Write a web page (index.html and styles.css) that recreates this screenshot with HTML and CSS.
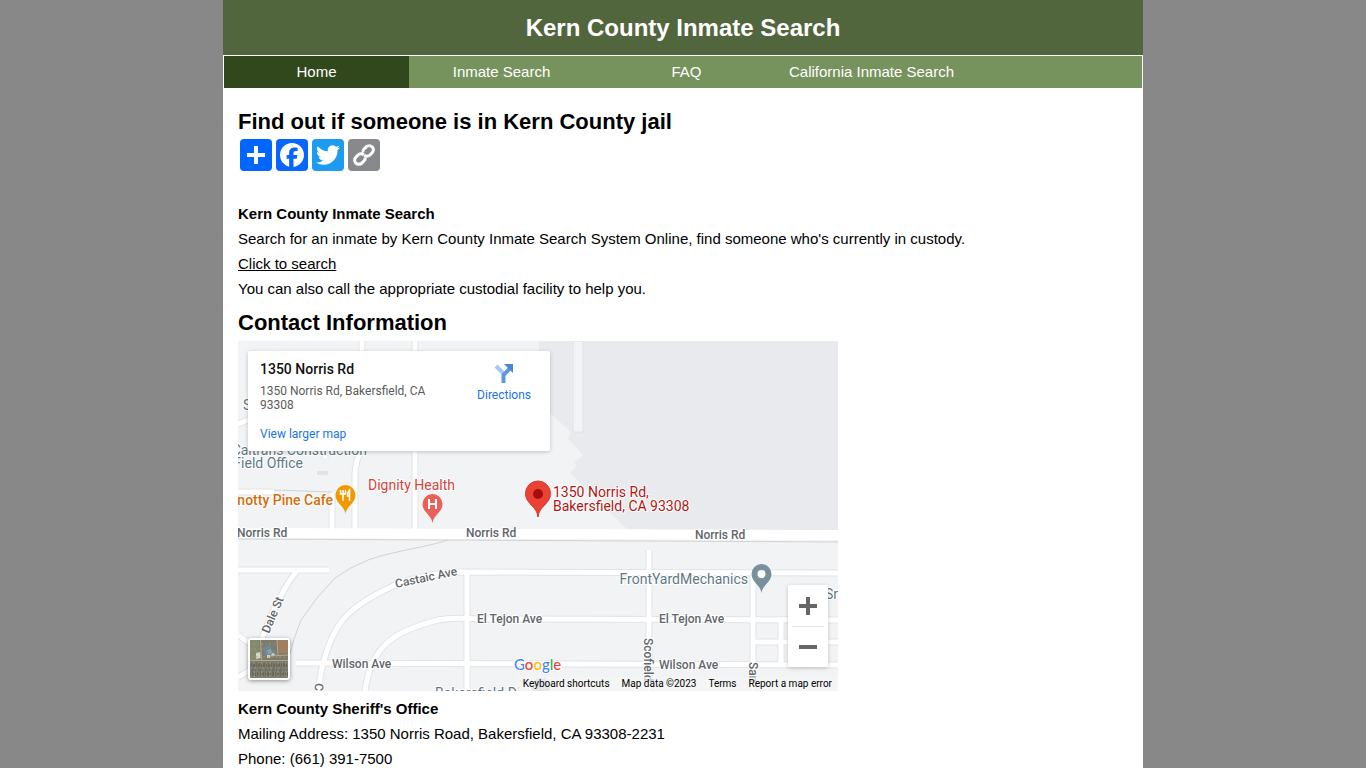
FILE: index.html
```
<!DOCTYPE html>
<html lang="en">
<head>
    <meta charset="UTF-8">
    <meta name="viewport" content="width=device-width, initial-scale=1.0">
    <title>Kern County Inmate Search</title>
    <link rel="stylesheet" href="styles.css">
</head>
<body>
    <div class="container">
        <header class="header">
            <h1>Kern County Inmate Search</h1>
        </header>
        <nav class="menu">
            <a href="#" class="active">Home</a>
            <a href="#search">Inmate Search</a>
            <a href="#faq">FAQ</a>
            <a href="#california">California Inmate Search</a>
        </nav>

        <main class="content">
            <h2>Find out if someone is in Kern County jail</h2>
            <div class="share">
                <a href="#share" class="share-any" aria-label="Share">
                    <svg viewBox="0 0 32 32"><path d="M14 7h4v18h-4z"/><path d="M7 14h18v4H7z"/></svg>
                </a>
                <a href="#facebook" class="share-facebook" aria-label="Facebook">
                    <svg viewBox="0 0 32 32"><path d="M28 16c0-6.627-5.373-12-12-12S4 9.373 4 16c0 5.628 3.875 10.35 9.101 11.647v-7.98h-2.474V16H13.1v-1.58c0-4.085 1.849-5.978 5.859-5.978.76 0 2.072.15 2.608.298v3.325c-.283-.03-.775-.045-1.386-.045-1.967 0-2.728.745-2.728 2.683V16h3.92l-.673 3.667h-3.247v8.245C23.395 27.195 28 22.135 28 16"/></svg>
                </a>
                <a href="#twitter" class="share-twitter" aria-label="Twitter">
                    <svg viewBox="0 0 32 32"><path d="M28 8.557a10 10 0 0 1-2.828.775 4.930 4.930 0 0 0 2.166-2.725 9.700 9.700 0 0 1-3.130 1.194 4.920 4.920 0 0 0-3.593-1.550 4.924 4.924 0 0 0-4.794 6.049c-4.090-.210-7.720-2.170-10.150-5.150a4.940 4.940 0 0 0-.665 2.477c0 1.710.870 3.214 2.190 4.100a5 5 0 0 1-2.230-.616v.060c0 2.390 1.700 4.380 3.952 4.830-.414.115-.850.174-1.297.174q-.476-.001-.928-.086a4.935 4.935 0 0 0 4.600 3.420 9.900 9.900 0 0 1-6.114 2.107q-.597 0-1.175-.068a13.950 13.950 0 0 0 7.550 2.213c9.056 0 14.010-7.507 14.010-14.013q0-.320-.015-.637c.960-.695 1.795-1.560 2.455-2.550z"/></svg>
                </a>
                <a href="#copy" class="share-copy" aria-label="Copy link">
                    <svg viewBox="0 0 32 32" class="outline">
                        <g transform="rotate(-45 16 16)">
                            <path d="M15 18.500a3.500 3.500 0 0 1-3 1.700H8.700a4.200 4.200 0 0 1 0-8.400H12q3.500.500 4 4"/>
                            <path d="M17 13.500a3.500 3.500 0 0 1 3-1.700h3.300a4.200 4.200 0 0 1 0 8.400H20q-3.500-.500-4-4"/>
                        </g>
                    </svg>
                </a>
            </div>

            <p><strong>Kern County Inmate Search</strong></p>
            <p>Search for an inmate by Kern County Inmate Search System Online, find someone who's currently in custody.</p>
            <p><a href="#search">Click to search</a></p>
            <p>You can also call the appropriate custodial facility to help you.</p>

            <h2>Contact Information</h2>
            <div class="map">
                <svg class="map-canvas" viewBox="0 0 600 350">
                    <defs>
                        <g id="roads">
                            <path d="M124 0v108q-7 12-7 26v54M177 0v188"/>
                            <path d="M0 151h36M94 152v36M87 108v9"/>
                            <path d="M0 229h91M59 230Q42 250 23 300"/>
                            <path d="M0 294l14 10M0 336l16-9M0 83l10-4"/>
                            <path d="M600 232l-380-1Q180 233 153 246Q118 262 103 281Q86 305 80 350"/>
                            <path d="M600 279l-360-1Q210 276 196 280Q160 290 147 304Q131 320 127 350"/>
                            <path d="M58 322l542 2M229 231v119M411 209v141M515 232v118"/>
                            <path d="M543 279v45M515 301h85"/>
                        </g>
                        <path id="pin" d="M0 0C-1-8-10-11-10-19a10 10 0 0 1 20 0C10-11 1-8 0 0z"/>
                    </defs>
                    <rect width="600" height="350" fill="#f1f3f4"/>
                    <path fill="#e8eaed" d="M301 0h299v190H391L332 132l7-7-3-4 9-7-15-16 3-7-19-17-13-14z"/>
                    <path fill="#f1f3f4" stroke="#e0e2e5" d="M335 0h10v91h-10z"/>
                    <use href="#roads" class="road-edge"/>
                    <use href="#roads" class="road"/>
                    <path class="main-road" d="M0 192l300 1 300 1"/>
                    <path class="rail" d="M0 198l600 3M210 199C190 206 155 210 130 219Q112 226 97 237Q78 256 63 279Q55 298 50 320"/>
                    <path class="rail" d="M36 149l58 2M79 131h11M79 133h11"/>

                    <g class="label place">
                        <text x="5" y="69">S</text>
                        <text x="129" y="114" text-anchor="end">Caltrans Construction</text>
                        <text x="65" y="127" text-anchor="end">Field Office</text>
                        <text x="510" y="243" text-anchor="end">FrontYardMechanics</text>
                        <text x="587" y="258">Sn</text>
                        <text x="197" y="357">Bakersfield Di</text>
                    </g>
                    <text class="label cafe" x="95" y="164" text-anchor="end">Knotty Pine Cafe</text>
                    <text class="label health" x="130" y="149">Dignity Health</text>
                    <text class="label target" x="315" y="156">1350 Norris Rd,</text>
                    <text class="label target" x="315" y="170">Bakersfield, CA 93308</text>
                    <g class="label street">
                        <text x="-1" y="196">Norris Rd</text>
                        <text x="228" y="196">Norris Rd</text>
                        <text x="457" y="198">Norris Rd</text>
                        <text x="239" y="282">El Tejon Ave</text>
                        <text x="421" y="282">El Tejon Ave</text>
                        <text x="94" y="327">Wilson Ave</text>
                        <text x="421" y="328">Wilson Ave</text>
                        <text transform="translate(158 247) rotate(-12)">Castaic Ave</text>
                        <text transform="translate(31 293) rotate(-67)">Dale St</text>
                        <text transform="translate(406 297) rotate(90)">Scofield</text>
                        <text transform="translate(511 321) rotate(90)">San</text>
                        <text transform="translate(77 342) rotate(93)">C</text>
                    </g>

                    <use href="#pin" fill="#f29900" x="107.500" y="173"/>
                    <path stroke="#fff" stroke-width="1.500" fill="none" d="M102.500 149v4h5v-4M105 149v11M111.500 160v-11q-2 2-2 6h2"/>
                    <use href="#pin" fill="#ea5f5a" x="194.500" y="182"/>
                    <path stroke="#fff" stroke-width="2" fill="none" d="M191 158v10M198 158v10M191 163h7"/>
                    <path fill="#ea4335" stroke="#d03a30" d="M300 176C299 165 287.500 163 287.500 152.500a12.500 12.500 0 0 1 25 0C312.500 163 301 165 300 176z"/>
                    <circle cx="300" cy="153" r="5" fill="#a50e0e"/>
                    <use href="#pin" fill="#78909c" x="523.500" y="252"/>
                    <circle cx="523.500" cy="233" r="4" fill="#fff"/>
                    <circle cx="303" cy="346" r="9" fill="#b8bfc4"/>
                    <text class="logo" x="276" y="329"><tspan fill="#4285f4">G</tspan><tspan fill="#ea4335">o</tspan><tspan fill="#fbbc04">o</tspan><tspan fill="#4285f4">g</tspan><tspan fill="#34a853">l</tspan><tspan fill="#ea4335">e</tspan></text>
                </svg>

                <div class="place-card">
                    <div class="address">
                        <div class="place-name">1350 Norris Rd</div>
                        <div class="place-text">1350 Norris Rd, Bakersfield, CA 93308</div>
                        <a href="#map">View larger map</a>
                    </div>
                    <a href="#directions" class="directions">
                        <svg viewBox="0 0 22 22">
                            <path d="M3 4l8 8" stroke="#a8c7f5" stroke-width="4"/>
                            <path d="M10.500 21v-8l7-7" stroke="#5e97e0" stroke-width="4" fill="none"/>
                            <path d="M11 2h9v9z" fill="#4a86d8"/>
                        </svg>
                        Directions
                    </a>
                </div>

                <button class="satellite" aria-label="Show satellite imagery">
                    <svg viewBox="0 0 38 38">
                        <path fill="#7d7b6b" d="M0 0h38v38H0z"/>
                        <path fill="#a27e60" d="M27 0h11v13H29z"/>
                        <path fill="#84886f" d="M0 0h9v20H0z"/>
                        <path fill="#6f8998" d="M13 7l7-2 2 5 4 1-1 5-10-1z"/>
                        <path fill="#8fa0a4" d="M17 10l4-1 1 4-4 1z"/>
                        <path fill="#d4d3c8" d="M6 13l4-1 1 6-5 1zM17 15h3v3h-3zM22 13l3 1-1 2h-3z"/>
                        <path stroke="#b5a98c" d="M0 20.500h38M10.500 0l1 20M27 0l1 16M20 16l18-1"/>
                        <path stroke="#66695a" stroke-width="4" stroke-dasharray="1 1 2 1" d="M1 25h36M0 34h38"/>
                        <path stroke="#6c7263" stroke-width="4" stroke-dasharray="3 1 1 2" d="M1 30h36"/>
                        <path stroke="#9c9b86" stroke-dasharray="1 2 2 3" d="M0 4h26M1 9h12M2 17h34M0 23h38M1 28h36M0 32h38M0 36h38"/>
                    </svg>
                </button>
                <div class="zoom">
                    <button aria-label="Zoom in"><svg viewBox="0 0 18 18"><path d="M7 0h4v7h7v4h-7v7H7v-7H0V7h7z"/></svg></button>
                    <button aria-label="Zoom out"><svg viewBox="0 0 18 18"><path d="M0 7h18v4H0z"/></svg></button>
                </div>
                <div class="attribution">
                    <a href="#shortcuts">Keyboard shortcuts</a>
                    <span>Map data ©2023</span>
                    <a href="#terms">Terms</a>
                    <a href="#report">Report a map error</a>
                </div>
            </div>

            <p><strong>Kern County Sheriff's Office</strong></p>
            <p>Mailing Address: 1350 Norris Road, Bakersfield, CA 93308-2231</p>
            <p>Phone: (661) 391-7500</p>
        </main>
    </div>
</body>
</html>
```
FILE: styles.css
```
body {
    margin: 0;
    background: #888;
    color: #000;
    font-family: Arial, "Liberation Sans", sans-serif;
    font-size: 15px;
    line-height: 25px;
}
.container {
    max-width: 920px;
    min-height: 100vh;
    margin: 0 auto;
    background: #fff;
}
.header {
    background: #52663e;
    color: #fff;
    text-align: center;
}
h1 {
    margin: 0;
    font-size: 24px;
    line-height: 55px;
}
.menu {
    display: flex;
    flex-wrap: wrap;
    margin: 1px 1px 0;
    background: #76935e;
}
.menu a {
    width: 185px;
    color: #fff;
    line-height: 32px;
    text-align: center;
    text-decoration: none;
}
.menu a.active, .menu a:hover {
    background: #30481c;
}
.content {
    padding: 12px 15px 0;
}
h2 {
    margin: 9px 0 3px;
    font-size: 22px;
    line-height: 25px;
}
p {
    margin: 0;
}
.content p a {
    color: #000;
}
.share {
    display: flex;
    gap: 4px;
    padding: 2px;
    margin-bottom: 28px;
}
.share a {
    width: 32px;
    height: 32px;
    border-radius: 4px;
}
.share svg {
    display: block;
    fill: #fff;
}
.share .outline {
    fill: none;
    stroke: #fff;
    stroke-width: 3;
}
.share-any {
    background: #0166ff;
}
.share-facebook {
    background: #0866ff;
}
.share-twitter {
    background: #1d9bf0;
}
.share-copy {
    background: #88898c;
}

/* map */
.map {
    position: relative;
    max-width: 600px;
    margin: 6px 0 5px;
    overflow: hidden;
    font-family: Roboto, sans-serif;
}
.map-canvas {
    display: block;
    width: 100%;
}
.road-edge, .road, .main-road, .rail {
    fill: none;
}
.road-edge {
    stroke: #e1e3e6;
    stroke-width: 7px;
}
.road {
    stroke: #fff;
    stroke-width: 5px;
}
.main-road {
    stroke: #fff;
    stroke-width: 10px;
}
.rail {
    stroke: #d0d2d5;
}
.label {
    font-size: 14px;
    paint-order: stroke;
    stroke: #fff;
    stroke-width: 2px;
}
.place {
    fill: #607884;
}
.cafe {
    fill: #d56e0c;
    font-weight: 500;
}
.health {
    fill: #d5423b;
}
.target {
    fill: #b31412;
}
.street {
    fill: #62666a;
    font-size: 12px;
    font-weight: 500;
}
.logo {
    font: 500 15px Lato, sans-serif;
    paint-order: stroke;
    stroke: #fff;
    stroke-width: 2px;
}
.place-card {
    position: absolute;
    top: 10px;
    left: 10px;
    display: flex;
    justify-content: space-between;
    box-sizing: border-box;
    width: 302px;
    height: 100px;
    padding: 10px 19px 8px 12px;
    background: #fff;
    border-radius: 2px;
    box-shadow: 0 1px 4px rgba(0,0,0,0.2);
    font-size: 12px;
    line-height: 14px;
}
.place-card a {
    color: #1a73e8;
    text-decoration: none;
}
.address {
    display: flex;
    flex-direction: column;
    width: 180px;
}
.place-name {
    margin-bottom: 7px;
    color: #111;
    font-size: 14px;
    font-weight: 500;
    line-height: 16px;
}
.place-text {
    margin-bottom: 15px;
    color: #5b5b5b;
}
.directions {
    display: flex;
    flex-direction: column;
    align-items: center;
    gap: 4px;
    padding-top: 1px;
}
.directions svg {
    width: 22px;
    height: 22px;
}
.satellite {
    position: absolute;
    left: 10px;
    bottom: 11px;
    width: 42px;
    height: 42px;
    padding: 0;
    border: 2px solid #fff;
    border-radius: 3px;
    box-shadow: 0 1px 4px rgba(0,0,0,0.4);
    overflow: hidden;
}
.satellite svg {
    display: block;
}
.zoom {
    position: absolute;
    right: 10px;
    bottom: 24px;
    width: 40px;
    background: #fff;
    border-radius: 2px;
    box-shadow: 0 1px 4px rgba(0,0,0,0.2);
}
.zoom button {
    display: block;
    width: 32px;
    height: 41px;
    margin: 0 4px;
    padding: 0 7px;
    border: 0;
    background: none;
}
.zoom button + button {
    border-top: 1px solid #e6e6e6;
}
.zoom svg {
    display: block;
    width: 18px;
    fill: #666;
}
.attribution {
    position: absolute;
    right: 0;
    bottom: 0;
    display: flex;
    gap: 12px;
    padding: 0 6px;
    background: rgba(245,245,245,0.7);
    font-size: 10px;
    line-height: 14px;
}
.attribution a, .attribution span {
    color: #000;
    text-decoration: none;
}
```
